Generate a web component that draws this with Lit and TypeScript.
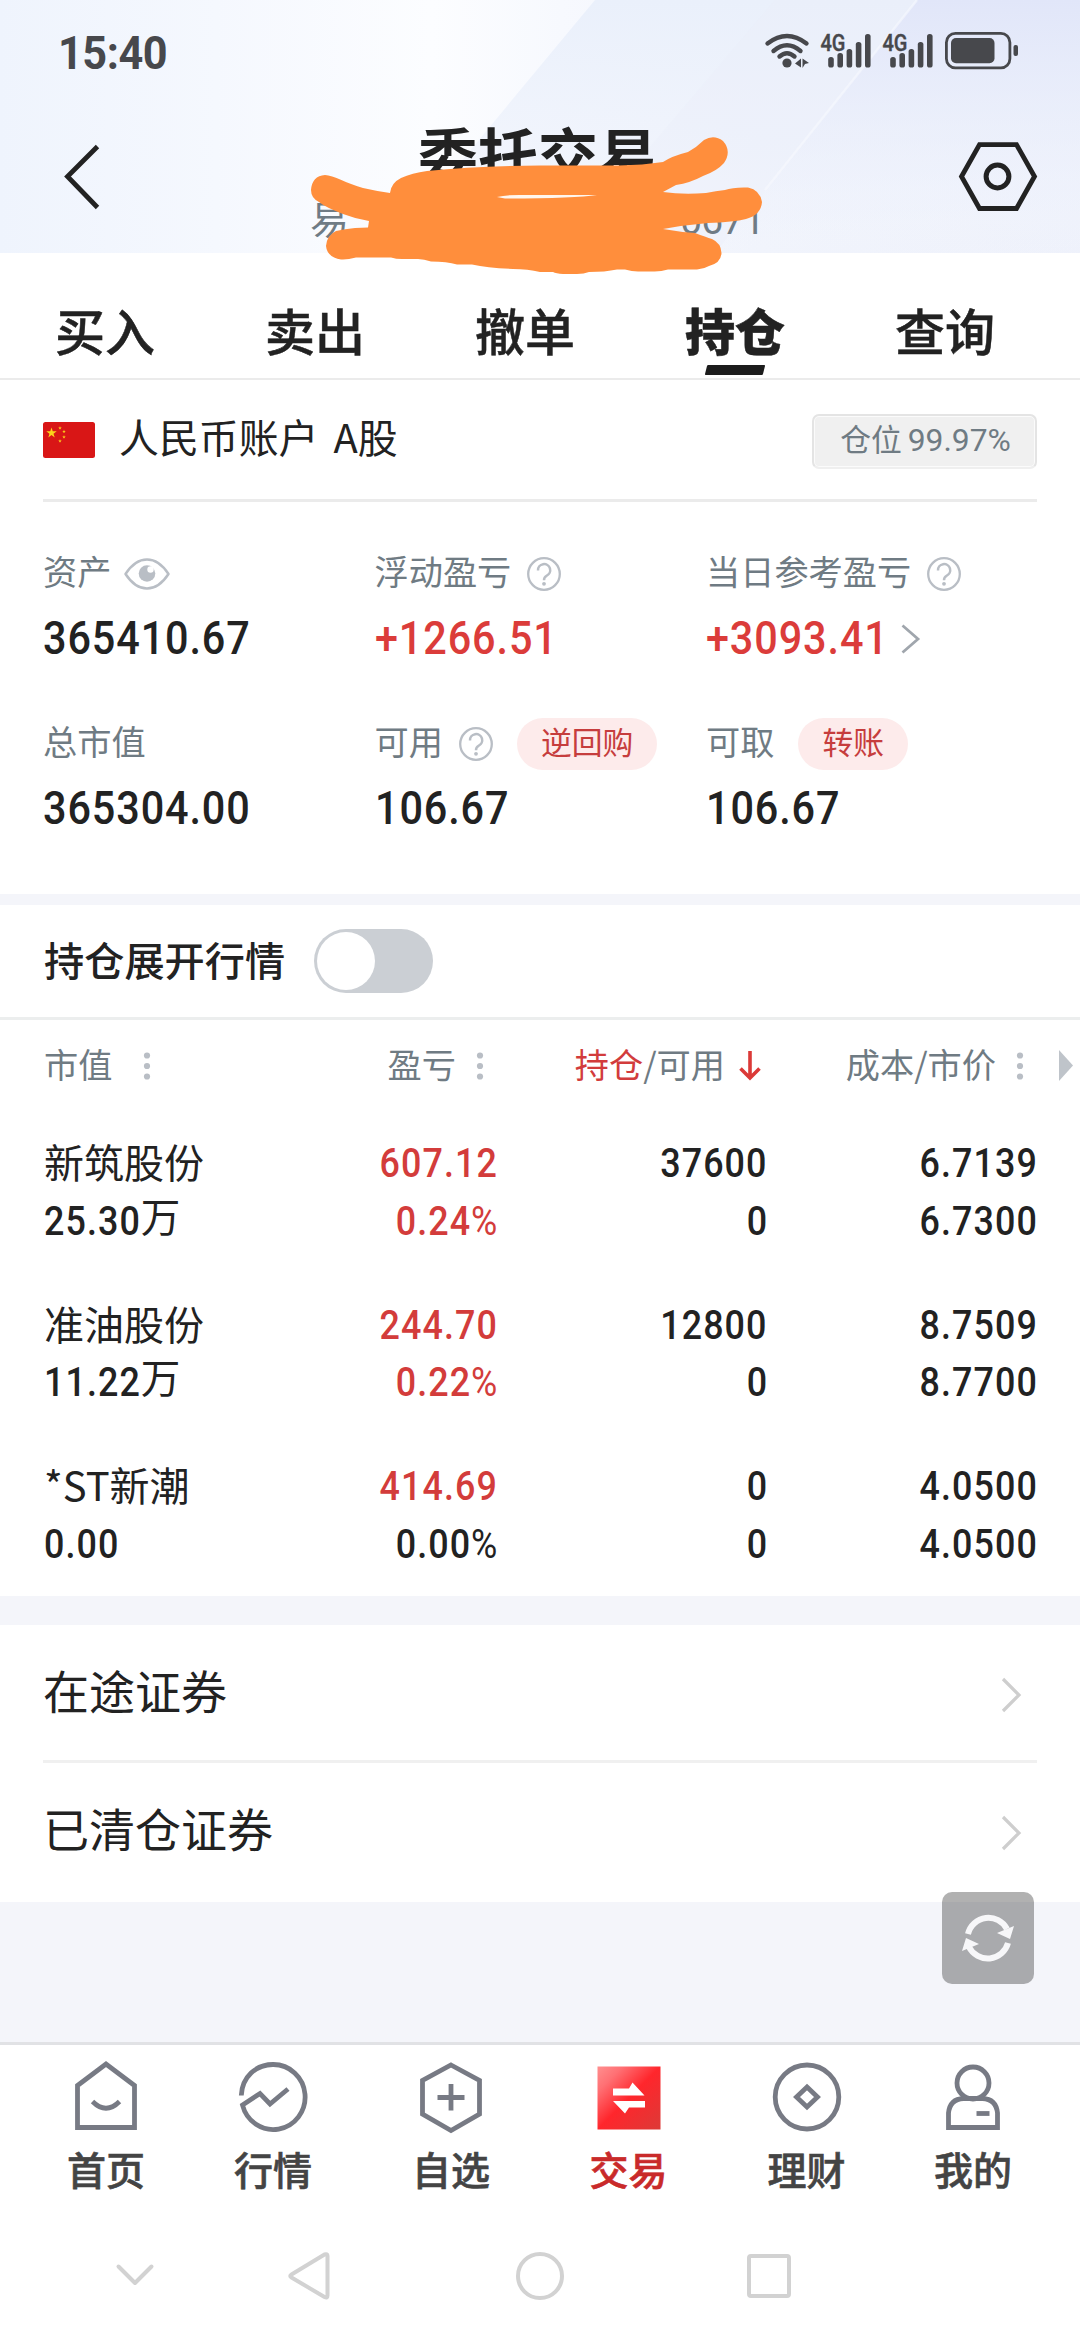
import { LitElement, html, css, svg, nothing } from "lit";
import { customElement, property } from "lit/decorators.js";

const base = css`
  * { box-sizing: border-box; }
  svg { display: block; flex: none; overflow: visible; }
`;

@customElement("status-bar")
class StatusBar extends LitElement {
  static styles = [base, css`
    :host { display: flex; justify-content: space-between; height: 104px; padding: 0 62px 0 58px; color: #47484c; }
    .time { font: 700 46px/52px Roboto, "Noto Sans CJK SC", sans-serif; letter-spacing: -.5px; margin-top: 27px;
      transform: scaleX(.94); transform-origin: left; }
    .net { font: 500 24.500px Roboto, sans-serif; }
  `];
  signal(x: number) {
    const bars = [[0, 57], [9.2, 53], [18.4, 49], [27.6, 42], [36.8, 34]];
    return svg`<g transform="translate(${x} 0)">
      <text class="net" x="-10.5" y="51" textLength="25" lengthAdjust="spacingAndGlyphs" fill="#47484c" stroke="#47484c" stroke-width=".4">4G</text>
      ${bars.map(([bx, t]) => svg`<rect x=${bx - 2.8} y=${t} width="5.6" height=${67.5 - t} rx="2.6" fill="#47484c"/>`)}
    </g>`;
  }
  render() {
    return html`<div class="time">15:40</div>
      <svg width="253" height="104" viewBox="765 0 253 104">
        <g fill="none" stroke="#47484c" stroke-width="4.4" stroke-linecap="round">
          <path d="M767.5 43.5Q787 28.5 806.500 43.500"/>
          <path d="M773.500 51Q787 39.500 800.500 51"/>
          <path d="M779.500 56.500Q787 50 794.500 56.500"/>
        </g>
        <circle cx="787" cy="63" r="4.600" fill="#47484c"/>
        <path d="M795 63.500l6-5v9zM802.500 58.500l6.500 4.500l-4 1l-2.500 4z" fill="#47484c"/>
        ${this.signal(831)}${this.signal(893)}
        <rect x="946.400" y="33.400" width="63.500" height="34.400" rx="9" fill="none" stroke="#47484c" stroke-width="2.800"/>
        <rect x="951" y="38" width="43.500" height="25.300" rx="5" fill="#47484c"/>
        <rect x="1013.500" y="45" width="4.500" height="11" rx="2" fill="#47484c"/>
      </svg>`;
  }
}

@customElement("page-header")
class PageHeader extends LitElement {
  static styles = [base, css`
    :host { display: block; position: relative; height: 253px; }
    .sky, .mark { position: absolute; left: 0; top: 0; }
    .content { position: relative; }
    .row { display: grid; grid-template-columns: 160px 1fr 160px; height: 149px; }
    .back { margin: 38px 0 0 62px; }
    .gear { margin: 36px 0 0 37px; }
    .titles { text-align: center; }
    .title { font: 700 60px/70px "Noto Sans CJK SC", sans-serif; color: #222; margin: 14px 4px 0 0; }
    .sub { display: flex; justify-content: space-between; width: 454px; margin: 8px 0 0 150px;
      font: 400 39px/50px Roboto, "Noto Sans CJK SC", sans-serif; color: #6f7b85; letter-spacing: -1px; }
  `];
  render() {
    return html`
      <svg class="sky" width="1080" height="253" viewBox="0 0 1080 253">
        <defs>
          <linearGradient id="bg" x1="0" y1="0" x2="1" y2="0">
            <stop offset="0" stop-color="#eff4fd"/><stop offset=".2" stop-color="#f5f8fe"/>
            <stop offset=".4" stop-color="#fcfdff"/><stop offset=".52" stop-color="#f7f9fe"/>
            <stop offset=".7" stop-color="#f1f4fc"/><stop offset="1" stop-color="#eef1fb"/>
          </linearGradient>
          <linearGradient id="b1" x1="0" y1="0" x2="0" y2="1">
            <stop offset="0" stop-color="#eaf0fb"/><stop offset=".6" stop-color="#eff3fc" stop-opacity=".8"/><stop offset="1" stop-color="#f3f6fd" stop-opacity="0"/>
          </linearGradient>
          <linearGradient id="b2" x1="0" y1="0" x2="0" y2="1">
            <stop offset="0" stop-color="#e1e6f9"/><stop offset="1" stop-color="#f1f4fc" stop-opacity="0.200"/>
          </linearGradient>
        </defs>
        <rect width="1080" height="253" fill="url(#bg)"/>
        <path d="M595 0H1080V253H385z" fill="url(#b1)"/>
        <path d="M775 0H917L715 253H560z" fill="#eceffa" opacity=".35"/>
        <path d="M917 0H1080V253H715z" fill="url(#b2)"/>
        <path d="M917 0L765 190" stroke="#f8faff" stroke-width="2.500" opacity=".6"/>
      </svg>
      <div class="content">
        <status-bar></status-bar>
        <div class="row">
          <svg class="back" width="40" height="70" viewBox="62 142 40 70"><path d="M97.500 146.500L67.500 176.500L97.500 207.500" fill="none" stroke="#222" stroke-width="4.800"/></svg>
          <div class="titles">
            <div class="title">委托交易</div>
            <div class="sub"><span>易</span><span>0671</span></div>
          </div>
          <svg class="gear" width="84" height="74" viewBox="957 140 84 74">
            <path d="M979.500 144.600H1016.500L1034.500 176.500L1016.500 208.500H979.500L961.500 176.500z" fill="none" stroke="#222" stroke-width="4.800"/>
            <circle cx="997.500" cy="176.500" r="11.400" fill="none" stroke="#222" stroke-width="5"/>
          </svg>
        </div>
      </div>
      <svg class="mark" width="1080" height="290" viewBox="0 0 1080 290">
        <path fill="#ff8e3c" d="M311 190Q312 176 325 175C333 175 348 184 363 188Q376 191 390 193Q391 183 401 178Q412 173 427 171Q480 166 540 165.500H619Q643 165 663 162Q672 156 688 152Q697 147 704 140Q714 134 723 141Q732 151 724 163Q717 171 703 176Q690 183 676 185L663 192Q683 195 706 193Q716 191 725 190Q733 187 748 187.500Q760 190 762 202Q761 215 746 219Q734 222 708 223Q685 225 663 229Q680 232 695 233Q706 237 712 239Q721 243 721.500 253Q721 263 709 266Q704 269 697 269.500H668Q660 272 652 271.500H638Q632 271.500 625 269.500H617Q605 272 589 272Q584 274 577 274H563Q556 273.500 553 272H540Q528 269 513 269Q488 268 472 264.500H457Q447 261.500 431 261.500Q424 259 418 259H402Q396 259 391 257.500H356Q347 260 341 259.500Q327 257 326 246Q327 235 336 231Q345 229 355 228L368 227.500L369 221Q356 219 343 214Q325 207 319 202Q311 198 311 190z"/>
        <path fill="#fff6ee" d="M497 197Q508 194.500 525 195H597Q575 198.500 505 198.500z"/>
      </svg>`;
  }
}

@customElement("trade-tabs")
class TradeTabs extends LitElement {
  static styles = [base, css`
    :host { display: flex; height: 127px; padding-right: 30px; border-bottom: 2px solid #ebebeb; background: #fff; }
    .tab { flex: 1; display: flex; flex-direction: column; align-items: center;
      font: 500 50px/74px "Noto Sans CJK SC", sans-serif; color: #222; padding-top: 39px; -webkit-text-stroke: .5px #222; }
    .tab.on { font-weight: 900; }
    .bar { width: 58px; height: 10px; background: #1c1c1c; border-radius: 1px; transform: skewX(-14deg); margin-top: -1px; }
  `];
  render() {
    return html`${["买入", "卖出", "撤单", "持仓", "查询"].map((t, i) =>
      html`<div class="tab ${i === 3 ? "on" : ""}">${t}${i === 3 ? html`<div class="bar"></div>` : nothing}</div>`)}`;
  }
}

const STAR = "M0 -1L.225 -.309L.951 -.309L.363 .118L.588 .809L0 .382L-.588 .809L-.363 .118L-.951 -.309L-.225 -.309z";

@customElement("account-row")
class AccountRow extends LitElement {
  static styles = [base, css`
    :host { display: flex; align-items: center; height: 122px; margin: 0 43px; border-bottom: 3px solid #ebebeb; }
    .name { font: 400 39.900px/60px "Noto Sans CJK SC", sans-serif; color: #222; word-spacing: 6px; margin: -7px 0 0 24px; flex: 1; }
    .badge { width: 225px; height: 55px; border: 2.500px solid #e4e4e4; border-bottom-color: #efefef; border-radius: 7px; background: #f0f0f0;
      box-shadow: inset 0 0 0 1px #fbfbfb; display: flex; justify-content: center; align-items: center; gap: 6px;
      font: 400 30.800px/46px "Noto Sans CJK SC", sans-serif; color: #6f7b83; margin-top: 3px; padding: 0 0 6px 2px; }
    .num { font: 400 31.800px/46px Roboto, sans-serif; padding-top: 4px; }
  `];
  render() {
    return html`<svg width="52" height="36" viewBox="0 0 52 36">
        <rect width="52" height="36" rx="2.500" fill="#d91616"/>
        <g fill="#fbd31b">
          <path d=${STAR} transform="translate(8.500 11) scale(5.500)"/>
          <path d=${STAR} transform="translate(17 6) scale(1.900)"/><path d=${STAR} transform="translate(21 9.500) scale(1.900)"/>
          <path d=${STAR} transform="translate(21 15) scale(1.900)"/><path d=${STAR} transform="translate(17 19) scale(1.900)"/>
        </g>
      </svg>
      <div class="name">人民币账户 A股</div>
      <div class="badge"><span>仓位</span><span class="num">99.97%</span></div>`;
  }
}

const help = html`<svg width="34" height="34" viewBox="0 0 34 34" fill="none" stroke="#b9bec5">
  <circle cx="17" cy="17" r="15.800" stroke-width="2.300"/>
  <path d="M11 13.500A6.100 6.100 0 1 1 19.500 18.800Q17 20 17 23.200" stroke-width="2.500"/>
  <circle cx="17" cy="26.800" r="1.900" fill="#b9bec5" stroke="none"/></svg>`;

const eye = html`<svg width="46" height="32" viewBox="0 0 46 32">
  <path d="M1.500 16Q11 1.500 23 1.500T44.500 16Q35 30.500 23 30.500T1.500 16z" fill="none" stroke="#b9bec5" stroke-width="2.500" stroke-linejoin="round"/>
  <circle cx="23" cy="15.500" r="8.300" fill="#b9bec5"/><circle cx="26.500" cy="11.500" r="3.200" fill="#fff"/></svg>`;

@customElement("asset-cell")
class AssetCell extends LitElement {
  @property() label = "";
  @property() value = "";
  @property() pill = "";
  @property({ type: Boolean }) eye = false;
  @property({ type: Boolean }) help = false;
  @property({ type: Boolean }) up = false;
  @property({ type: Boolean }) more = false;
  static styles = [base, css`
    :host { display: block; }
    .top { display: flex; align-items: center; height: 52px; }
    .label { font: 400 34.200px/52px "Noto Sans CJK SC", sans-serif; color: #6f7b83; margin-top: -9px; }
    .eye { margin-left: 13px; }
    .help { margin-left: 16px; }
    .pill { height: 52px; border-radius: 26px; background: #fdebeb; padding: 0 24px;
      font: 400 30.800px/45px "Noto Sans CJK SC", sans-serif; color: #c63d3d; margin-left: 24px; }
    .bottom { display: flex; align-items: center; height: 60px; margin-top: 8px; }
    .value { font: 500 46.500px/60px Roboto, sans-serif; letter-spacing: 1px; color: #222; transform: scaleX(.89); transform-origin: left; }
    .value.up { color: #db3c3a; }
    .more { margin: 2px 0 0 -10px; }
  `];
  render() {
    return html`<div class="top"><span class="label">${this.label}</span>
        ${this.eye ? html`<span class="eye">${eye}</span>` : nothing}
        ${this.help ? html`<span class="help">${help}</span>` : nothing}
        ${this.pill ? html`<span class="pill">${this.pill}</span>` : nothing}</div>
      <div class="bottom"><span class="value ${this.up ? "up" : ""}">${this.value}</span>
        ${this.more ? html`<svg class="more" width="20" height="30" viewBox="0 0 20 30"><path d="M1.500 1.500L17 15L1.500 28.500" fill="none" stroke="#a0a6ad" stroke-width="2.800"/></svg>` : nothing}</div>`;
  }
}

const dots = html`<svg width="6" height="28" viewBox="0 0 6 28" fill="#b9bec5"><circle cx="3" cy="3.500" r="3.100"/><circle cx="3" cy="14" r="3.100"/><circle cx="3" cy="24.500" r="3.100"/></svg>`;

@customElement("position-table")
class PositionTable extends LitElement {
  static styles = [base, css`
    :host { display: block; height: 576px; }
    .grid { display: grid; grid-template-columns: 200px 253px 270px 270px 1fr; padding-left: 44px; }
    .head { height: 88px; align-items: center; font: 400 34.200px/50px "Noto Sans CJK SC", sans-serif; color: #6f7b83; padding-bottom: 2px; }
    .h { display: flex; align-items: center; justify-content: flex-end; }
    .h svg { margin-top: 5px; }
    .h.first { justify-content: flex-start; gap: 32px; }
    .h.dot { gap: 21px; padding-right: 14px; }
    .h.sorted { gap: 14px; padding-right: 6px; }
    .h.end { justify-content: flex-start; padding-left: 22px; }
    .hot { color: #d23c3c; }
    .row { height: 161.500px; padding-top: 25px; font: 500 40.300px/57.500px Roboto, "Noto Sans CJK SC", sans-serif; color: #222; }
    .cell { text-align: right; white-space: nowrap; }
    .cell.left { text-align: left; }
    .n { display: inline-block; position: relative; top: 2px; letter-spacing: 1.200px; margin-right: -1px; transform: scaleX(.89); transform-origin: right; }
    .left .n { transform-origin: left; }
    .name { font: 400 40px/57.500px "Noto Sans CJK SC", sans-serif; }
    .line { height: 57.500px; }
    .unit { font: 400 39.500px/40px "Noto Sans CJK SC", sans-serif; margin-left: -11px; position: relative; top: -1px; }
    .pct { font-weight: 400; }
    .up { color: #d33c3b; }
  `];
  rows = [
    { name: "新筑股份", mv: "25.30", unit: "万", pl: "607.12", pct: "0.24", hold: "37600", cost: "6.7139", price: "6.7300" },
    { name: "准油股份", mv: "11.22", unit: "万", pl: "244.70", pct: "0.22", hold: "12800", cost: "8.7509", price: "8.7700" },
    { name: "*ST新潮", mv: "0.00", unit: "", pl: "414.69", pct: "0.00", hold: "0", cost: "4.0500", price: "4.0500" },
  ];
  render() {
    const n = (v: unknown, cls = "") => html`<div class="line ${cls}"><span class="n">${v}</span></div>`;
    return html`<div class="grid head">
        <div class="h first">市值${dots}</div>
        <div class="h dot">盈亏${dots}</div>
        <div class="h sorted"><span><span class="hot">持仓</span>/可用</span>
          <svg width="22" height="30" viewBox="0 0 22 30"><path d="M11 0V26M1.500 17.500L11 27L20.500 17.500" fill="none" stroke="#db3a38" stroke-width="3.600"/></svg></div>
        <div class="h dot">成本/市价${dots}</div>
        <div class="h end"><svg width="14" height="31" viewBox="0 0 14 31"><path d="M0 0L14 15.500L0 31z" fill="#bfc4ca"/></svg></div>
      </div>
      ${this.rows.map(r => html`<div class="grid row">
        <div class="cell left"><div class="name">${r.name}</div><div class="line"><span class="n">${r.mv}</span>${r.unit ? html`<span class="unit">${r.unit}</span>` : nothing}</div></div>
        <div class="cell">${n(r.pl, "up")}${n(html`${r.pct}<span class="pct">%</span>`, r.pct === "0.00" ? "" : "up")}</div>
        <div class="cell">${n(r.hold)}${n("0")}</div>
        <div class="cell">${n(r.cost)}${n(r.price)}</div>
      </div>`)}`;
  }
}

@customElement("bottom-bar")
class BottomBar extends LitElement {
  static styles = [base, css`
    :host { display: block; height: 298px; border-top: 3px solid #e1e2e5; background: #fff; }
    .tabs { display: grid; grid-template-columns: 168px 166px 190px 165px 191px 142px; padding: 15px 0 0 22px; height: 167px; }
    .tab { display: flex; flex-direction: column; align-items: center; font: 500 39px/50px "Noto Sans CJK SC", sans-serif; color: #444; -webkit-text-stroke: .6px currentColor; }
    .tab svg { margin-bottom: 9px; }
    .tab.on { color: #c92a2a; }
    .nav { display: flex; align-items: center; padding-left: 115px; height: 128px; }
    .back { margin-left: 133px; }
    .home { margin-left: 185px; }
    .recent { margin-left: 181px; }
  `];
  icons = [
    svg`<path d="M6.500 67.500V25.500L35 4L63.500 25.500V67.500z"/><path d="M21.500 41.500Q35 55 48.500 41.500" />`,
    svg`<path d="M3.300 35.500C4 17 18 4.500 35 4.500A31.800 32.500 0 1 1 4.500 45L22 33.500L32 44L50 29"/>`,
    svg`<path d="M35 5L63.500 20.500V54L35 70.500L6.500 54V20.500z"/><path d="M35 24V50.500M21.500 37.500H48.500"/>`,
    svg`<defs><linearGradient id="r" x1="0" y1="0" x2="1" y2="1"><stop offset="0" stop-color="#ff8f8f"/><stop offset=".2" stop-color="#ff7074"/><stop offset=".5" stop-color="#ff262c"/><stop offset="1" stop-color="#dc3a37"/></linearGradient></defs>
      <rect x="3.500" y="6.500" width="63" height="63" fill="url(#r)" stroke="none"/><g fill="#fff" stroke="none"><path d="M19 28.500H35L38.500 22.500L50.500 35.500H19z"/><path d="M51 47.500H35L31 53.500L19 41H51z"/></g>`,
    svg`<ellipse cx="35" cy="37" rx="31.800" ry="32"/><path d="M35 27L45.500 37L35 47L24.500 37z"/>`,
    svg`<circle cx="35" cy="23" r="16"/><path d="M10.500 67.500V53Q12 39 25.500 38.500H44.500Q58 39 59.500 53V67.500z"/><path d="M38.500 53.500H51.500"/>`,
  ];
  render() {
    const names = ["首页", "行情", "自选", "交易", "理财", "我的"];
    return html`<div class="tabs">${names.map((n, i) => html`<div class="tab ${i === 3 ? "on" : ""}">
        <svg width="70" height="74" viewBox="0 0 70 74" fill="none" stroke="#777a84" stroke-width="4.800">${this.icons[i]}</svg><span>${n}</span></div>`)}</div>
      <div class="nav"><svg width="40" height="48" viewBox="0 0 40 48" fill="none" stroke="#d2d2d2" stroke-width="4" stroke-linecap="round" stroke-linejoin="round"><path d="M3.500 14.500L20 31L36.500 14.500"/></svg>
        <svg class="back" width="43" height="48" viewBox="0 0 43 48" fill="none" stroke="#d2d2d2" stroke-width="4" stroke-linejoin="round"><path d="M36.500 2.500Q39.500 1.500 39.500 4V43.500Q39.500 46.500 36.500 45L3.500 25.500Q1 24 3.500 22.500z"/></svg>
        <svg class="home" width="48" height="48" viewBox="0 0 48 48" fill="none" stroke="#d2d2d2" stroke-width="4"><circle cx="24" cy="24" r="22"/></svg>
        <svg class="recent" width="48" height="48" viewBox="0 0 48 48" fill="none" stroke="#d2d2d2" stroke-width="4"><rect x="4" y="4" width="40" height="40" rx="2"/></svg>
      </div>`;
  }
}

@customElement("app-root")
class AppRoot extends LitElement {
  static styles = [base, css`
    :host { display: flex; flex-direction: column; position: relative; width: 1080px; height: 2340px; background: #f4f5fa; overflow: hidden; }
    page-header { z-index: 1; flex: none; }
    .white { background: #fff; }
    .assets { display: grid; grid-template-columns: 331.500px 331.500px 331.500px; grid-auto-rows: 170px; height: 392px; padding: 46px 0 0 43px; }
    .switchrow { display: flex; align-items: center; height: 115px; margin-top: 11px; padding-left: 44px; border-bottom: 3px solid #eceeee;
      font: 500 40.200px/60px "Noto Sans CJK SC", sans-serif; color: #222; }
    .txt { margin-top: -5px; }
    .switch { width: 119px; height: 64px; border-radius: 32px; background: #cbcfd4; margin-left: 29px; padding: 3px; }
    .knob { width: 58px; height: 58px; border-radius: 50%; background: #fff; }
    .links { margin-top: 29px; height: 277px; padding: 0 43px; }
    .link { height: 138px; display: flex; align-items: center; justify-content: space-between; padding-right: 16px;
      font: 400 46px/60px "Noto Sans CJK SC", sans-serif; color: #222; }
    .link + .link { border-top: 3px solid #f0f0f0; height: 140px; margin-top: -3px; }
    .link span { margin-top: -10px; }
    .link svg { margin-top: 2px; }
    .refresh { position: absolute; right: 46px; top: 1892px; width: 92px; height: 92px; border-radius: 10px; background: rgba(0, 0, 0, .305); }
    bottom-bar { margin-top: auto; }
  `];
  render() {
    const arrow = html`<svg width="20" height="36" viewBox="0 0 20 36"><path d="M2 2L18 18L2 34" fill="none" stroke="#cecece" stroke-width="3.200"/></svg>`;
    return html`<page-header></page-header>
      <trade-tabs></trade-tabs>
      <div class="white"><account-row></account-row>
        <div class="assets">
          <asset-cell label="资产" value="365410.67" eye></asset-cell>
          <asset-cell label="浮动盈亏" value="+1266.51" help up></asset-cell>
          <asset-cell label="当日参考盈亏" value="+3093.41" help up more></asset-cell>
          <asset-cell label="总市值" value="365304.00"></asset-cell>
          <asset-cell label="可用" value="106.67" help pill="逆回购"></asset-cell>
          <asset-cell label="可取" value="106.67" pill="转账"></asset-cell>
        </div></div>
      <div class="white switchrow"><span class="txt">持仓展开行情</span><div class="switch"><div class="knob"></div></div></div>
      <position-table class="white"></position-table>
      <div class="white links">
        <div class="link"><span>在途证券</span>${arrow}</div>
        <div class="link"><span>已清仓证券</span>${arrow}</div>
      </div>
      <div class="refresh"><svg width="92" height="92" viewBox="0 0 92 92">
        <g fill="none" stroke="#f7f7f9" stroke-width="6"><path d="M26 42A21 21 0 0 1 65 37"/><path d="M66 51A21 21 0 0 1 27 55"/></g>
        <path d="M72 34L68 47L55 41z M20 59L24 46L37 52z" fill="#f7f7f9"/></svg></div>
      <bottom-bar></bottom-bar>`;
  }
}
